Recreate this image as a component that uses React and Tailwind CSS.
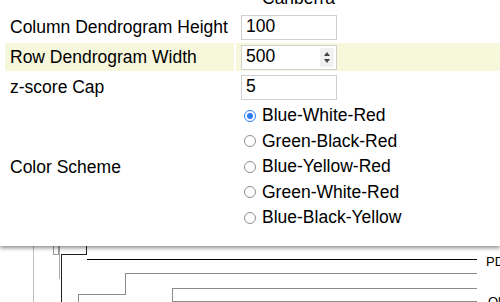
import React, { useState } from 'react';

const schemes = [
  'Blue-White-Red',
  'Green-Black-Red',
  'Blue-Yellow-Red',
  'Green-White-Red',
  'Blue-Black-Yellow',
];

const Radio = ({ checked }) => (
  <span
    className={`flex-shrink-0 w-[12px] h-[12px] rounded-full flex items-center justify-center ${
      checked ? 'border-[1.5px] border-[#2f7cf6] bg-white' : 'border border-[#8f8f8f] bg-white'
    }`}
  >
    {checked && <span className="w-[6px] h-[6px] rounded-full bg-[#2f7cf6]" />}
  </span>
);

const NumberInput = ({ value, spinner }) => (
  <div className="relative w-[96px] h-[25px] border border-[#cfcfcf] bg-white flex items-center pl-[4px]">
    <span className="leading-none">{value}</span>
    {spinner && (
      <div className="absolute right-[2px] top-[2px] w-[14px] h-[19px] bg-[#f1f1f1] flex flex-col items-center justify-center gap-[3px]">
        <svg width="6" height="4" viewBox="0 0 6 4">
          <path d="M0 4 L3 0 L6 4 Z" fill="#444" />
        </svg>
        <svg width="6" height="4" viewBox="0 0 6 4">
          <path d="M0 0 L3 4 L6 0 Z" fill="#444" />
        </svg>
      </div>
    )}
  </div>
);

const Row = ({ label, children, highlight }) => (
  <div className="flex gap-[2px] h-[28px]">
    <div className={`w-[229px] pl-[5px] flex items-center ${highlight ? 'bg-[#f7f7dc]' : ''}`}>
      {label}
    </div>
    <div className={`flex-1 pl-[5px] flex items-center ${highlight ? 'bg-[#f7f7dc]' : ''}`}>
      {children}
    </div>
  </div>
);

const Dendrogram = () => (
  <svg width="500" height="56" viewBox="0 0 500 56" className="block">
    <g fill="none" strokeWidth="1" shapeRendering="crispEdges">
      <path d="M33.5 0 V56" stroke="#bdbdbd" />
      <path d="M53.5 0 V8.5 H58.5 V0" stroke="#9a9a9a" />
      <path d="M59.5 0 V33" stroke="#a8a8a8" />
      <path d="M61.5 56 V8.5 H86.5 V0" stroke="#222" />
      <path d="M86.5 13.5 H477" stroke="#000" />
      <path d="M477 27.5 H125.5 V48.5 H78.5 V56" stroke="#8a8a8a" />
      <path d="M477 42.5 H172.5 V56" stroke="#8a8a8a" />
      <path d="M172.5 55.5 H477" stroke="#8a8a8a" />
    </g>
    <text x="486" y="20" fontSize="13" fill="#000" fontFamily="Liberation Sans, Arial, sans-serif">PD</text>
    <text x="488" y="60" fontSize="13" fill="#000" fontFamily="Liberation Sans, Arial, sans-serif">Ol</text>
  </svg>
);

export default function App() {
  const [scheme] = useState(0);

  return (
    <div className="w-[500px] h-[302px] overflow-hidden bg-white text-black text-[17.5px] font-['Liberation_Sans',Arial,sans-serif]">
      <div className="relative z-10 flow-root w-[500px] h-[246px] bg-white shadow-[0_2px_4px_rgba(0,0,0,0.45)]">
        {/* clipped last option of the list above */}
        <div className="-mt-[10px] h-[17px] leading-none pl-[262px]">Canberra</div>

        <div className="mt-[6px] pl-[5px] flex flex-col gap-[2px]">
          <Row label="Column Dendrogram Height">
            <NumberInput value="100" />
          </Row>
          <Row label="Row Dendrogram Width" highlight>
            <NumberInput value="500" spinner />
          </Row>
          <Row label="z-score Cap">
            <NumberInput value="5" />
          </Row>
          <div className="flex gap-[2px]">
            <div className="w-[229px] pl-[5px] flex items-center">Color Scheme</div>
            <div className="flex-1 pl-[8px] flex flex-col">
              {schemes.map((name, i) => (
                <div key={name} className="h-[25.5px] flex items-center gap-[6px]">
                  <Radio checked={i === scheme} />
                  <span className="leading-none">{name}</span>
                </div>
              ))}
            </div>
          </div>
        </div>
      </div>
      <Dendrogram />
    </div>
  );
}
